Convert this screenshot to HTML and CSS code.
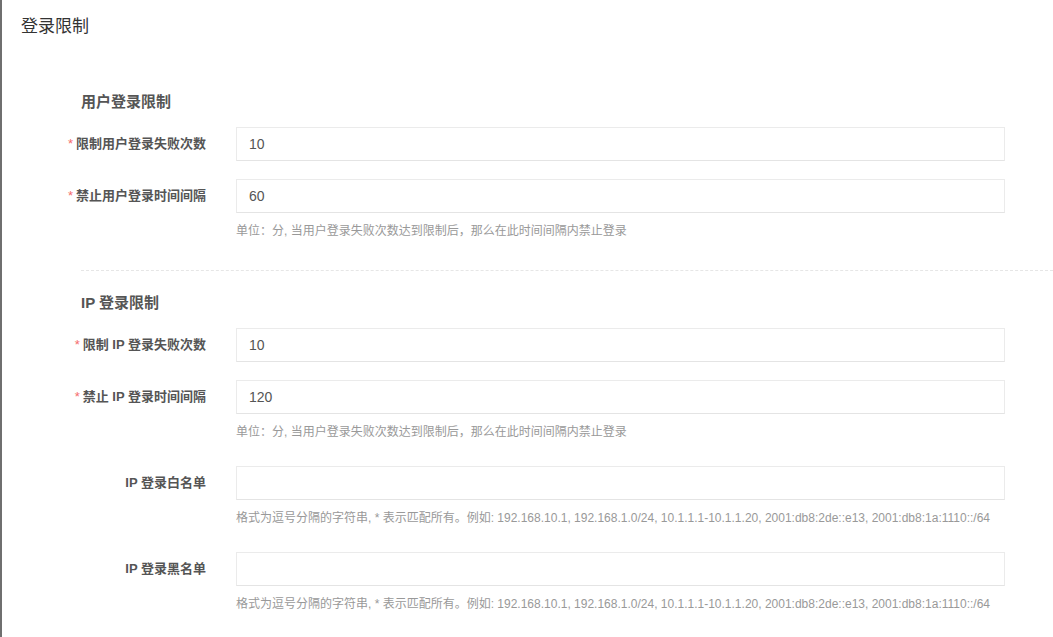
FILE: index.html
```html
<!DOCTYPE html>
<html lang="zh-CN">
<head>
<meta charset="utf-8">
<title>登录限制</title>
<link rel="stylesheet" href="styles.css">
</head>
<body>
<div class="page">
  <div class="page-header">登录限制</div>
  <div class="form">
    <div class="section">
      <div class="section-title">用户登录限制</div>
      <div class="item">
        <label class="label"><span class="req">*</span>限制用户登录失败次数</label>
        <div class="control"><input class="input" type="text" value="10"></div>
      </div>
      <div class="item has-help">
        <label class="label"><span class="req">*</span>禁止用户登录时间间隔</label>
        <div class="control">
          <input class="input" type="text" value="60">
          <div class="help">单位：分, 当用户登录失败次数达到限制后，那么在此时间间隔内禁止登录</div>
        </div>
      </div>
    </div>
    <div class="divider"></div>
    <div class="section">
      <div class="section-title">IP 登录限制</div>
      <div class="item">
        <label class="label"><span class="req">*</span>限制 IP 登录失败次数</label>
        <div class="control"><input class="input" type="text" value="10"></div>
      </div>
      <div class="item has-help">
        <label class="label"><span class="req">*</span>禁止 IP 登录时间间隔</label>
        <div class="control">
          <input class="input" type="text" value="120">
          <div class="help">单位：分, 当用户登录失败次数达到限制后，那么在此时间间隔内禁止登录</div>
        </div>
      </div>
      <div class="item has-help">
        <label class="label">IP 登录白名单</label>
        <div class="control">
          <input class="input" type="text" value="">
          <div class="help">格式为逗号分隔的字符串, * 表示匹配所有。例如: 192.168.10.1, 192.168.1.0/24, 10.1.1.1-10.1.1.20, 2001:db8:2de::e13, 2001:db8:1a:1110::/64</div>
        </div>
      </div>
      <div class="item has-help">
        <label class="label">IP 登录黑名单</label>
        <div class="control">
          <input class="input" type="text" value="">
          <div class="help">格式为逗号分隔的字符串, * 表示匹配所有。例如: 192.168.10.1, 192.168.1.0/24, 10.1.1.1-10.1.1.20, 2001:db8:2de::e13, 2001:db8:1a:1110::/64</div>
        </div>
      </div>
    </div>
  </div>
</div>
</body>
</html>
```

FILE: styles.css
```css
* { box-sizing: border-box; }
html, body {
  margin: 0;
  padding: 0;
  background: #fff;
}
body {
  font-family: "Liberation Sans", "Noto Sans CJK SC", sans-serif;
  color: #555;
}
.page {
  min-height: 637px;
  border-left: 2px solid #6f6f6f;
}
.page-header {
  height: 50px;
  padding: 13px 0 0 19px;
  font-size: 17px;
  line-height: 24px;
  color: #333;
  font-family: "Noto Sans CJK SC", sans-serif;
}
.form {
  padding: 42px 0 0 19px;
}
.section-title {
  margin-left: 60px;
  font-size: 15px;
  font-weight: bold;
  line-height: 20px;
  color: #555;
  margin-bottom: 15px;
}
.item {
  display: flex;
  align-items: flex-start;
  padding-right: 48px;
  margin-bottom: 18px;
}
.item.has-help {
  margin-bottom: 25px;
}
.label {
  flex: 0 0 185px;
  text-align: right;
  font-size: 13px;
  font-weight: bold;
  line-height: 34px;
  color: #555;
  white-space: nowrap;
}
.req {
  color: #f56c6c;
  font-weight: normal;
  margin-right: 3px;
}
.control {
  flex: 1;
  margin-left: 30px;
}
.input {
  display: block;
  width: 100%;
  height: 34px;
  border: 1px solid #ebebeb;
  border-bottom-color: #e4e4e4;
  border-radius: 0;
  padding: 0 12px;
  font-family: "Liberation Sans", "Noto Sans CJK SC", sans-serif;
  font-size: 14px;
  color: #555;
  background: #fff;
  outline: none;
}
.help {
  margin-top: 9px;
  font-size: 12px;
  line-height: 18px;
  color: #999;
  white-space: nowrap;
}
.divider {
  margin: 30px 0 22px 60px;
  border-top: 1px dashed #e6e6e6;
}
```
